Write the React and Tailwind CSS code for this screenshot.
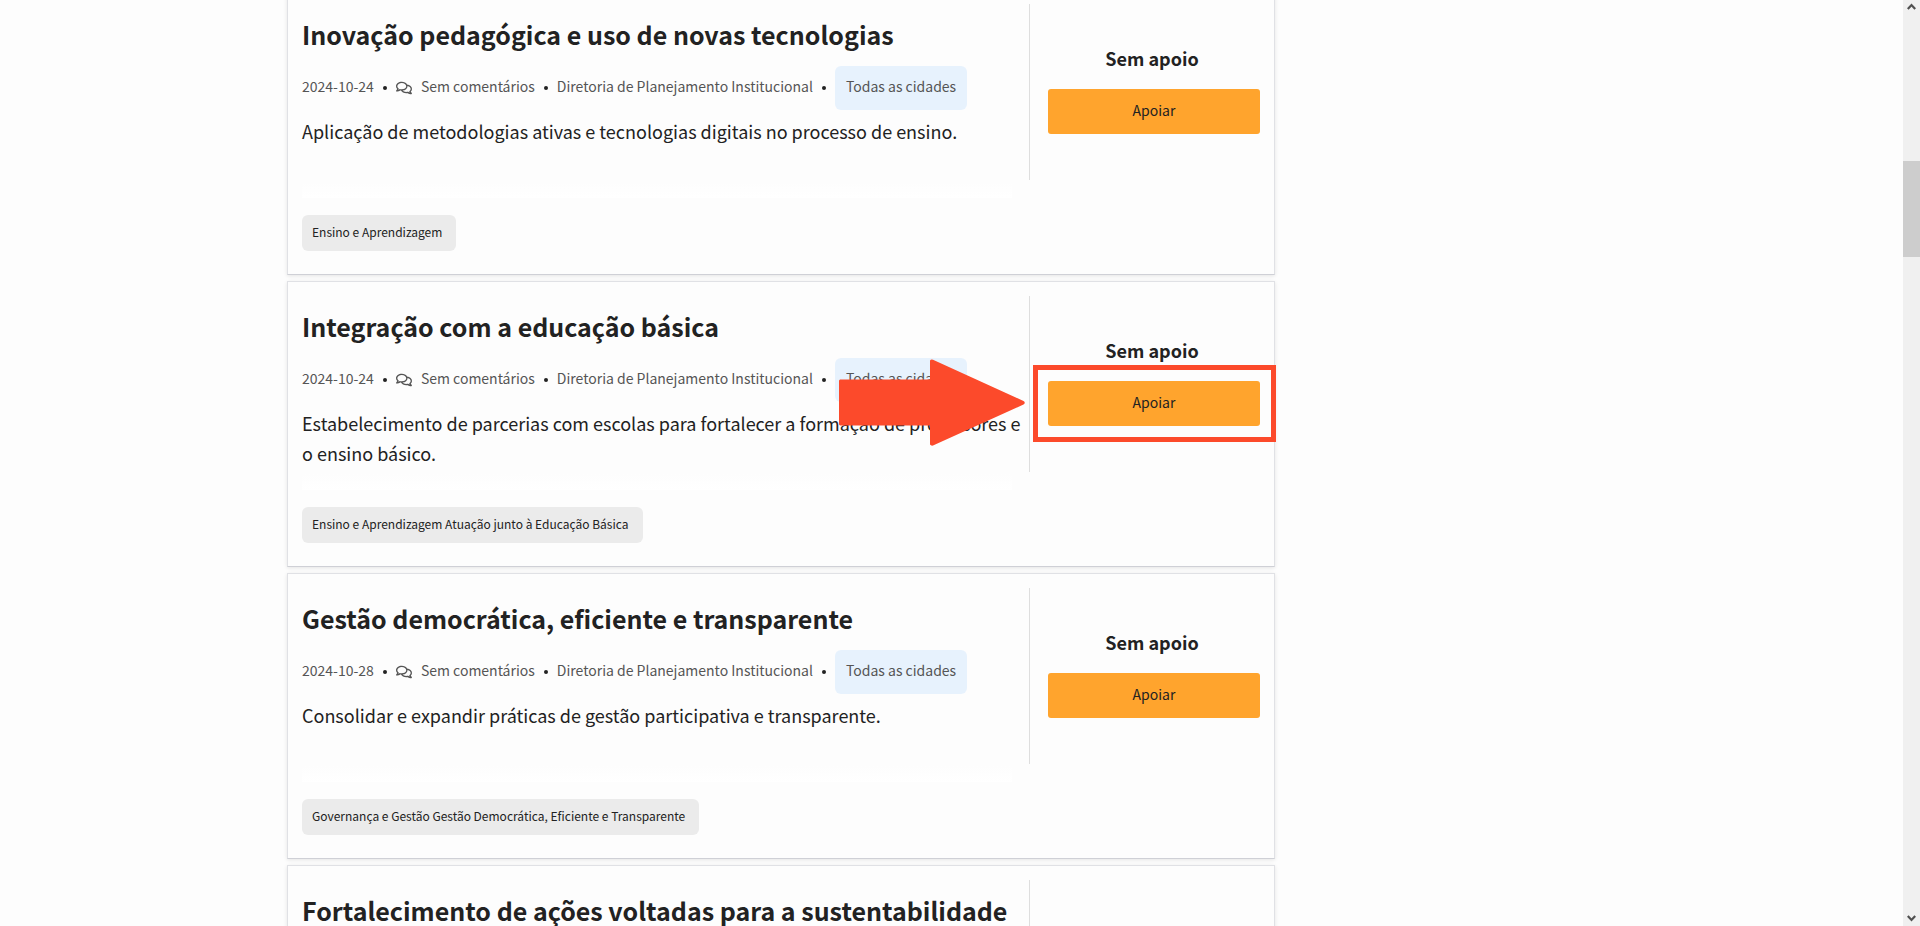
import React from "react";
import { FaRegComments } from "react-icons/fa";

const proposals = [
  {
    id: 1,
    title: "Inovação pedagógica e uso de novas tecnologias",
    date: "2024-10-24",
    description:
      "Aplicação de metodologias ativas e tecnologias digitais no processo de ensino.",
    tag: "Ensino e Aprendizagem",
  },
  {
    id: 2,
    title: "Integração com a educação básica",
    date: "2024-10-24",
    description:
      "Estabelecimento de parcerias com escolas para fortalecer a formação de professores e o ensino básico.",
    tag: "Ensino e Aprendizagem Atuação junto à Educação Básica",
    highlighted: true,
  },
  {
    id: 3,
    title: "Gestão democrática, eficiente e transparente",
    date: "2024-10-28",
    description:
      "Consolidar e expandir práticas de gestão participativa e transparente.",
    tag: "Governança e Gestão Gestão Democrática, Eficiente e Transparente",
  },
  {
    id: 4,
    title: "Fortalecimento de ações voltadas para a sustentabilidade",
  },
];

export default function App() {
  return (
    <div className="flex h-screen overflow-hidden bg-[#fdfdfd] font-['Noto_Sans_CJK_SC','Noto_Sans',sans-serif] text-[#222222]">
      <main className="min-w-0 flex-1 pl-[287px]">
        <ul className="-mt-[11px] flex max-w-[988px] flex-col gap-[6px]">
          {proposals.map((proposal) => (
            <ProposalCard key={proposal.id} proposal={proposal} />
          ))}
        </ul>
      </main>
      <ScrollTrack />
    </div>
  );
}

function ProposalCard({ proposal }) {
  return (
    <li className="relative min-h-[286px] border border-[#e0e1e5] border-b-[#cfd0d6] bg-[#fdfdfd] py-[14px] pl-[14px] shadow-[0_1px_4px_rgba(10,10,10,0.1)]">
      <div className="flex h-[194px] items-start">
        <div className="min-w-0 flex-1">
          <h2 className="mt-[14px] text-[25px] leading-8 font-bold">
            {proposal.title}
          </h2>
          {proposal.date && <ProposalMeta date={proposal.date} />}
          {proposal.description && (
            <p className="mt-[6px] h-[62px] text-[18px] leading-[30px]">
              {proposal.description}
            </p>
          )}
          <div className="mt-1 mr-[17px] h-4 bg-linear-to-b from-[#fdfdfd] to-white" />
        </div>
        <SupportColumn empty={!proposal.date} />
      </div>
      {proposal.tag && (
        <a
          href="#"
          className="mt-[17px] block w-fit rounded-md bg-[#ebebeb] pr-[14px] pb-[2px] pl-[10px] text-[12px] leading-[34px]"
        >
          {proposal.tag}
        </a>
      )}
      {proposal.highlighted && <Callout />}
    </li>
  );
}

function ProposalMeta({ date }) {
  return (
    <div className="mt-4 flex h-11 gap-[9px] text-[14px] leading-10 whitespace-nowrap text-[#555555]">
      <span>{date}</span>
      <Dot />
      <FaRegComments className="size-4 self-center" />
      <span>Sem comentários</span>
      <Dot />
      <span>Diretoria de Planejamento Institucional</span>
      <Dot />
      <a href="#" className="rounded-md bg-[#e7f2fd] px-[11px]">
        Todas as cidades
      </a>
    </div>
  );
}

function Dot() {
  return <span className="size-1 self-center rounded-full bg-[#222222]" />;
}

function SupportColumn({ empty }) {
  return (
    <div className="h-44 w-[245px] border-l border-[#dedede]">
      {!empty && (
        <>
          <h3 className="mt-10 text-center text-[18px] leading-7 font-bold">
            Sem apoio
          </h3>
          <div className="mt-[17px] pr-[14px] pl-[18px]">
            <button
              type="button"
              className="block h-[45px] w-full rounded-[3px] bg-[#ffa42d] pb-[2px] text-[14px]"
            >
              Apoiar
            </button>
          </div>
        </>
      )}
    </div>
  );
}

// Red arrow and frame that point at the support button
function Callout() {
  return (
    <>
      <svg
        className="pointer-events-none absolute top-[77px] right-[248px] h-[87px] w-[187px]"
        viewBox="0 0 187 87"
        fill="#fc4a2b"
        aria-hidden="true"
      >
        <path d="M0 21.5L1 20.5H91V1.5Q92 0 94 0.7L184.5 42Q187 43.5 184.5 45.5L94 86.5Q92 87 91 85.5V66.5H1L0 65.5Z" />
      </svg>
      <div className="pointer-events-none absolute top-[83px] -right-[2px] h-[77px] w-[243px] border-[5px] border-[#fc4a2b]" />
    </>
  );
}

function ScrollTrack() {
  return (
    <div className="flex w-[17px] flex-col items-center justify-between bg-[#f0f0f0] pt-[3px] pb-1 text-[#505050]">
      <div className="flex w-full flex-col items-center">
        <Chevron />
        <div className="mt-[150px] h-24 w-full bg-[#cdcdcd]" />
      </div>
      <Chevron className="rotate-180" />
    </div>
  );
}

function Chevron({ className }) {
  return (
    <svg className={className} width="9" height="8" viewBox="0 0 9 8" aria-hidden="true">
      <path
        d="M0.8 6L4.5 2L8.2 6"
        fill="none"
        stroke="currentColor"
        strokeWidth="2.2"
      />
    </svg>
  );
}
